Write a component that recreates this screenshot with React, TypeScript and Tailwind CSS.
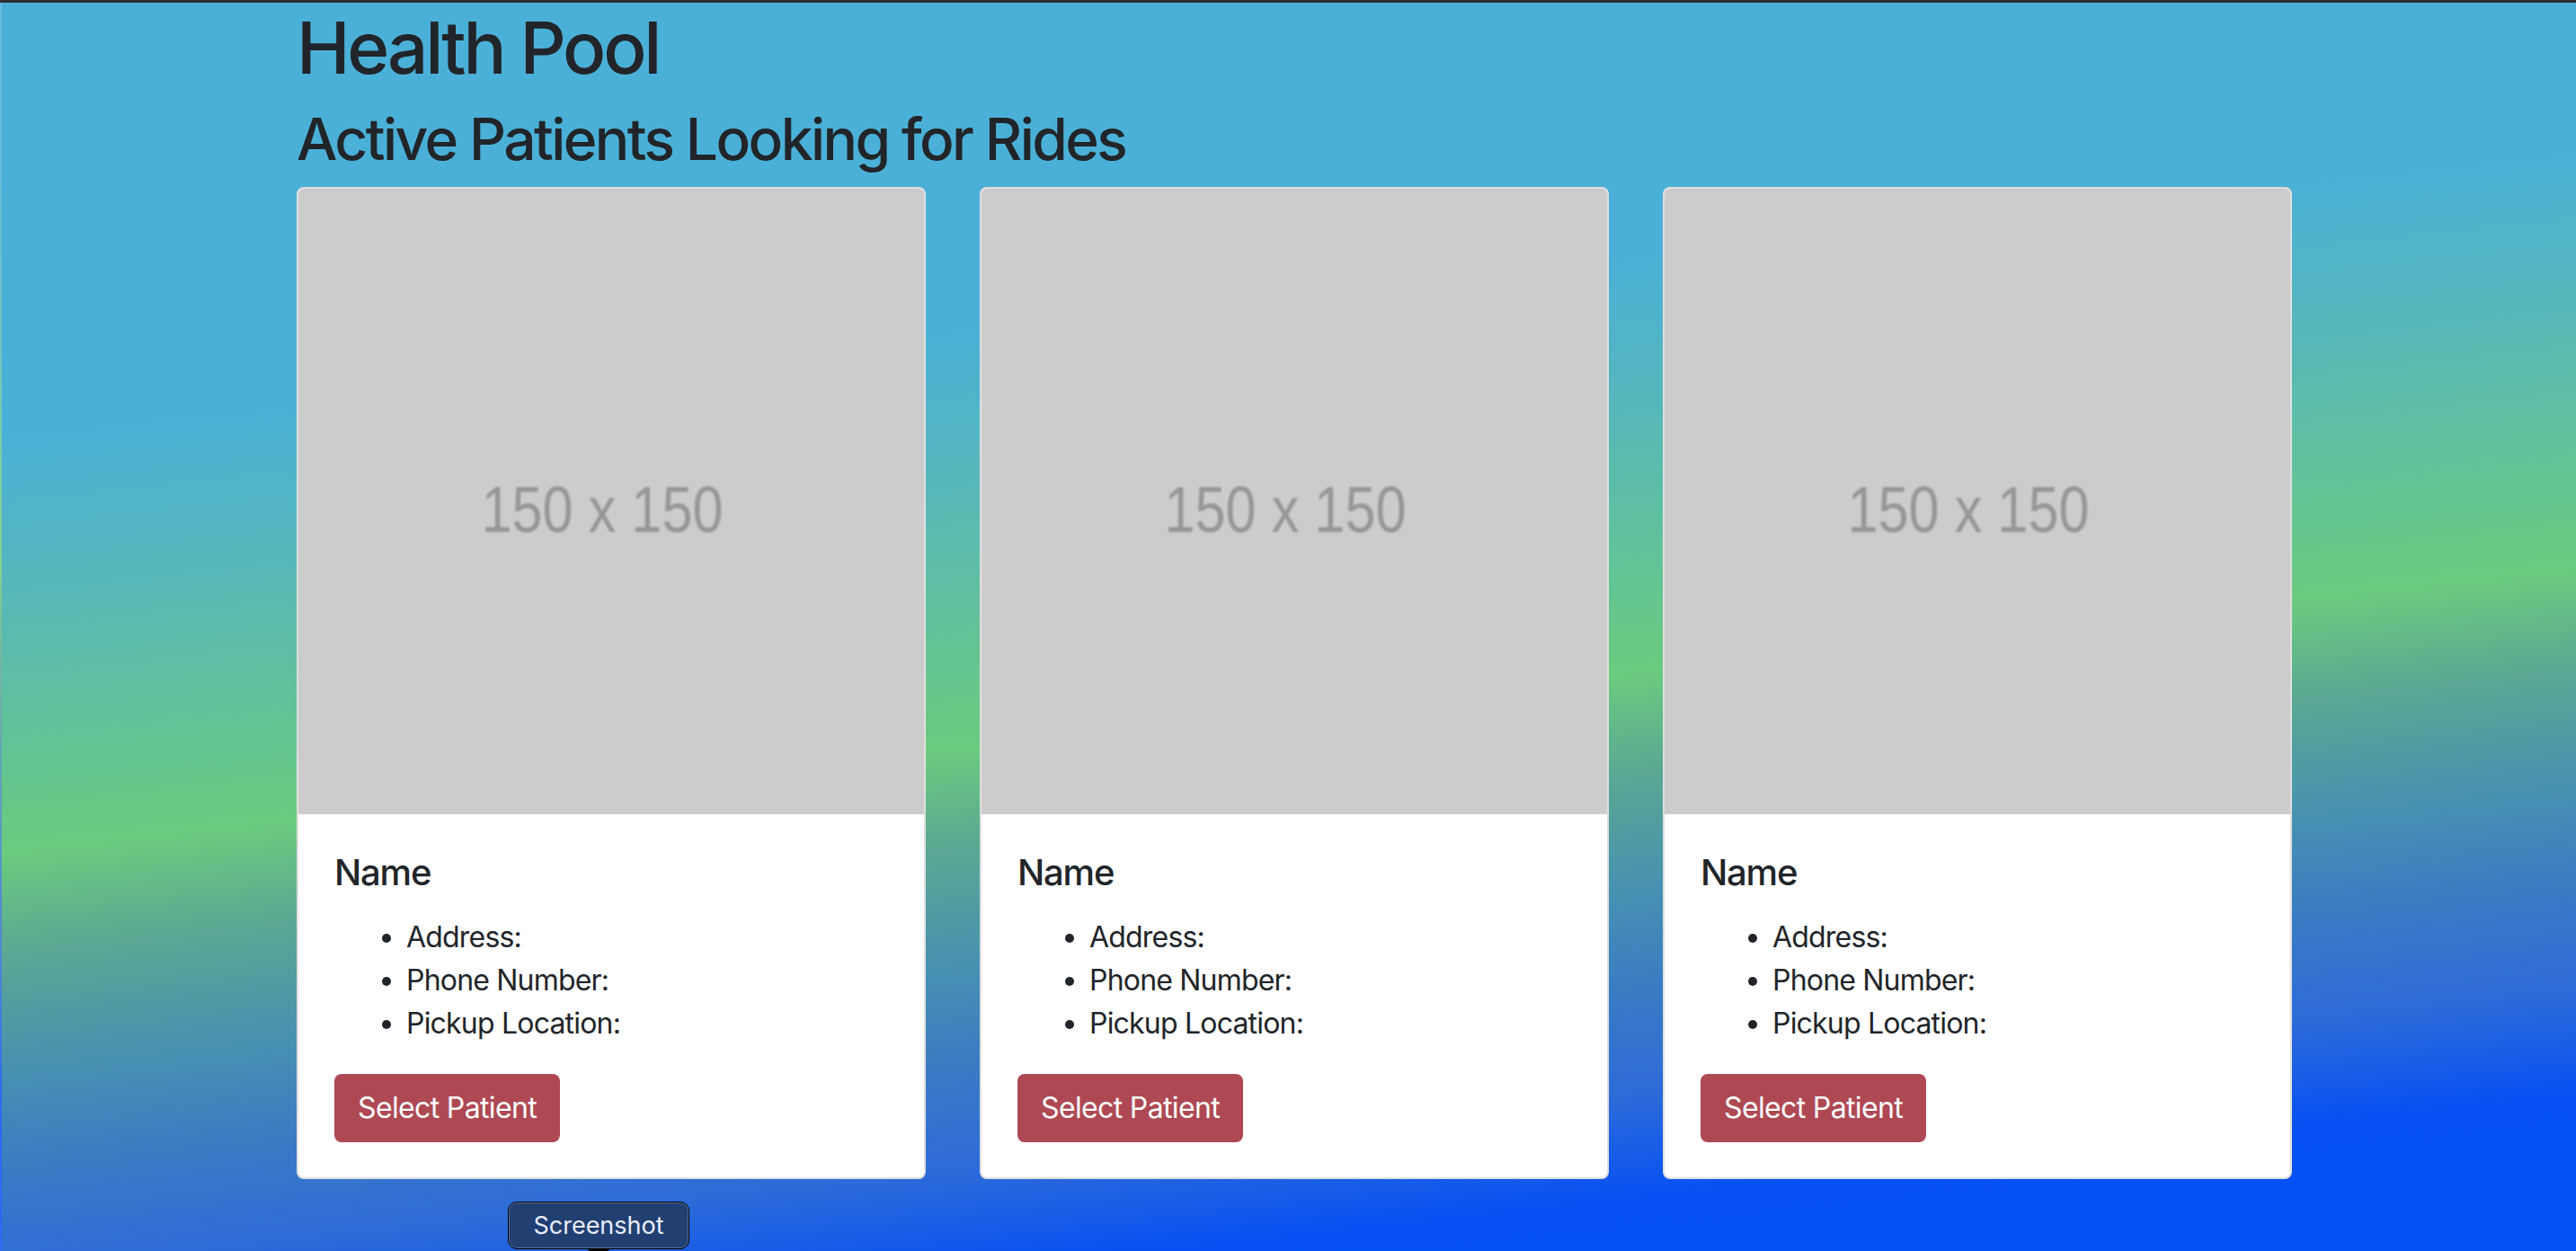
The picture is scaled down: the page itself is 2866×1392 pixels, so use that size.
import React from 'react';

// placeholder "150 x 150" image, drawn since there is no network
const Placeholder: React.FC = () => (
  <svg viewBox="0 0 696 696" className="block w-[696px] h-[696px]">
    <defs>
      <filter id="soft">
        <feGaussianBlur stdDeviation="0.9" />
      </filter>
    </defs>
    <rect width="696" height="696" fill="#cccccc" />
    <text
      x="338"
      y="382"
      textAnchor="middle"
      fontSize="72"
      fill="#969696"
      textLength="269"
      lengthAdjust="spacingAndGlyphs"
      filter="url(#soft)"
      style={{ fontFamily: '"Liberation Sans", Arial, sans-serif' }}
    >
      150 x 150
    </text>
  </svg>
);

const PatientCard: React.FC = () => (
  <div className="w-[700px] bg-white border-2 border-black/[.125] rounded-[8px] overflow-hidden flex flex-col">
    <Placeholder />
    <div className="pt-[41px] px-[40px] pb-[39px]">
      <h5 className="text-[40px] leading-[48px] font-medium text-[#212529] mb-[24px] tracking-[-0.03em]">Name</h5>
      <ul className="list-disc pl-[80px] mb-[32px] text-[32px] leading-[48px] text-[#212529] tracking-[-0.025em]">
        <li>Address:</li>
        <li>Phone Number:</li>
        <li>Pickup Location:</li>
      </ul>
      <button className="bg-[#ae4954] text-white text-[32px] leading-[48px] px-[24px] py-[12px] border-2 border-transparent rounded-[8px] tracking-[-0.02em]">
        Select Patient
      </button>
    </div>
  </div>
);

export default function App() {
  return (
    <div className="h-screen flex flex-col font-['Inter',sans-serif] overflow-hidden relative">
      <div className="h-[3px] bg-[#2e2e2e] shrink-0" />
      <div className="flex-1 border-l-2 border-white/15 bg-[linear-gradient(173.7deg,#4bb0d7_0%,#4bb0d7_28%,#55b6be_37%,#6bcb7e_55.5%,#5aa893_62%,#4690b2_70%,#3879c6_77%,#2d6bd8_83%,#0650f4_90%,#0450f5_100%)]">
        <div className="ml-[328px] w-[2220px] pt-[2px]">
          <h1 className="text-[80px] leading-[96px] font-medium text-[#212529] mb-[16px] tracking-[-0.04em]">Health Pool</h1>
          <h2 className="text-[64px] leading-[76px] font-medium text-[#212529] mb-[15px] tracking-[-0.04em]">
            Active Patients Looking for Rides
          </h2>
          <div className="grid grid-cols-3 gap-[60px]">
            <PatientCard />
            <PatientCard />
            <PatientCard />
          </div>
        </div>
      </div>

      {/* macOS screenshot tooltip over the page */}
      <div className="absolute left-[565px] top-[1337px] w-[202px] h-[53px] rounded-[10px] border border-black bg-[#223f72] shadow-[inset_0_0_0_1px_rgba(255,255,255,0.25)] flex items-center justify-center">
        <span className="text-[27px] text-[#e8eefa] leading-none">Screenshot</span>
        <div className="absolute left-1/2 -translate-x-1/2 top-full w-0 h-0 border-l-[14px] border-r-[14px] border-t-[10px] border-l-transparent border-r-transparent border-t-black" />
      </div>
    </div>
  );
}
